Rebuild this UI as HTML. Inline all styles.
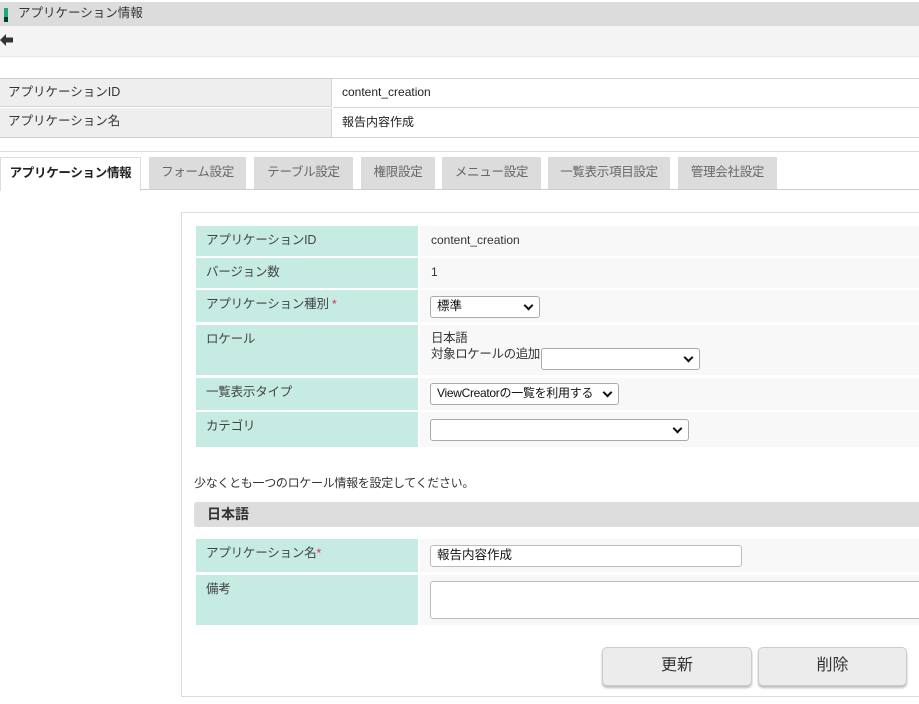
<!DOCTYPE html>
<html><head><meta charset="utf-8"><style>
*{margin:0;padding:0;box-sizing:border-box}
body{width:919px;height:704px;overflow:hidden;background:#fff;font-family:"Liberation Sans","Noto Sans CJK JP",sans-serif;font-size:13px;color:#333;position:relative;line-height:16px}
.a{position:absolute}
.tab{position:absolute;top:157px;height:32px;background:#dcdcdc;color:#666;text-align:center;line-height:30px;font-size:12.5px;letter-spacing:-0.3px}
.lab{position:absolute;left:196px;width:222px;background:#c5ebe2;color:#444;padding-left:10px;padding-top:6px;font-size:12.5px;letter-spacing:-0.2px}
.val{position:absolute;left:420px;right:0;background:#f8f8f8;padding-left:11px;padding-top:6px;font-size:12.5px}
.sel{position:absolute;background:#fff;border:1px solid #aaa;border-radius:3px;height:22px;font-size:12.5px;color:#111;padding:0 6px;line-height:19px;white-space:nowrap;overflow:hidden}
.sel:after{content:"";position:absolute;right:7px;top:5px;width:5px;height:5px;border-right:2px solid #111;border-bottom:2px solid #111;transform:rotate(45deg);background:#fff}
.star{color:#e0245e;font-size:12px;vertical-align:top}
.btn{position:absolute;top:647px;height:39px;background:#ececec;border:1px solid #ccc;border-radius:5px;box-shadow:0 2px 2px #bbb;text-align:center;line-height:35px;font-size:16px;color:#333}
</style></head><body>
<div class="a" style="left:0;top:2px;width:919px;height:24px;background:#dcdcdc"></div>
<div class="a" style="left:4px;top:8px;width:4px;height:9px;background:#1aaa80"></div>
<div class="a" style="left:4px;top:17px;width:4px;height:5px;background:#0b3a2c"></div>
<div class="a" style="left:18px;top:5px;font-size:12.5px;color:#333">アプリケーション情報</div>
<div class="a" style="left:0;top:26px;width:919px;height:31px;background:#f4f4f4;border-bottom:1px solid #e8e8e8"></div>
<svg class="a" style="left:0;top:34px" width="14" height="12" viewBox="0 0 14 12"><path d="M0 6L6 0V3.5H13V8.5H6V12Z" fill="#333"/></svg>

<div class="a" style="left:0;top:78px;width:919px;height:60px;border-top:1px solid #d4d4d4;border-bottom:1px solid #d4d4d4"></div>
<div class="a" style="left:0;top:79px;width:332px;height:28px;background:#eee;border-bottom:1px solid #d4d4d4;border-right:1px solid #d4d4d4;padding:5px 8px;font-size:12.5px">アプリケーションID</div>
<div class="a" style="left:0;top:108px;width:332px;height:29px;background:#eee;border-right:1px solid #d4d4d4;padding:5px 8px;font-size:12.5px">アプリケーション名</div>
<div class="a" style="left:333px;top:107px;width:586px;height:1px;background:#d4d4d4"></div>
<div class="a" style="left:342px;top:84px;font-size:12px;color:#222">content_creation</div>
<div class="a" style="left:342px;top:114px;font-size:12px;color:#222">報告内容作成</div>

<div class="a" style="left:0;top:151px;width:919px;height:1px;background:#ddd"></div>
<div class="a" style="left:0;top:189px;width:919px;height:1px;background:#ccc"></div>
<div class="tab" style="left:0;width:141px;height:34px;background:#fff;color:#222;font-weight:bold;border:1px solid #ddd;border-bottom:none">アプリケーション情報</div>
<div class="tab" style="left:149px;width:97px">フォーム設定</div>
<div class="tab" style="left:254px;width:99px">テーブル設定</div>
<div class="tab" style="left:361px;width:74px">権限設定</div>
<div class="tab" style="left:442px;width:99px">メニュー設定</div>
<div class="tab" style="left:548px;width:122px">一覧表示項目設定</div>
<div class="tab" style="left:678px;width:99px">管理会社設定</div>

<div class="a" style="left:181px;top:212px;width:750px;height:485px;border:1px solid #ddd"></div>

<div class="lab" style="top:226px;height:30px">アプリケーションID</div><div class="val" style="top:226px;height:30px;font-size:12px">content_creation</div>
<div class="lab" style="top:258px;height:30px">バージョン数</div><div class="val" style="top:258px;height:30px;font-size:12px">1</div>
<div class="lab" style="top:290px;height:32px">アプリケーション種別 <span class="star">*</span></div><div class="val" style="top:290px;height:32px"></div>
<div class="sel" style="left:430px;top:296px;width:110px">標準</div>
<div class="lab" style="top:325px;height:50px">ロケール</div><div class="val" style="top:325px;height:50px;padding-top:5px;line-height:16px;letter-spacing:-0.4px">日本語<br>対象ロケールの追加</div>
<div class="sel" style="left:541px;top:348px;width:159px"></div>
<div class="lab" style="top:378px;height:32px">一覧表示タイプ</div><div class="val" style="top:378px;height:32px"></div>
<div class="sel" style="left:430px;top:383px;width:189px;padding:0 20px 0 6px;font-size:12px;letter-spacing:-0.3px">ViewCreatorの一覧を利用する</div>
<div class="lab" style="top:412px;height:35px">カテゴリ</div><div class="val" style="top:412px;height:35px"></div>
<div class="sel" style="left:430px;top:419px;width:259px"></div>

<div class="a" style="left:194px;top:475px;font-size:12px;letter-spacing:-0.3px">少なくとも一つのロケール情報を設定してください。</div>
<div class="a" style="left:194px;top:502px;width:725px;height:25px;background:#ddd;border-radius:3px 0 0 3px;padding:4px 13px;font-weight:bold;font-size:14px;color:#333;line-height:16px">日本語</div>

<div class="lab" style="top:539px;height:33px">アプリケーション名<span class="star">*</span></div><div class="val" style="top:539px;height:33px"></div>
<div class="a" style="left:430px;top:545px;width:312px;height:22px;background:#fff;border:1px solid #bbb;border-radius:3px;padding:0 6px;line-height:19px;font-size:12.5px;color:#111">報告内容作成</div>
<div class="lab" style="top:575px;height:50px">備考</div><div class="val" style="top:575px;height:50px"></div>
<div class="a" style="left:430px;top:581px;width:500px;height:38px;background:#fff;border:1px solid #bbb;border-radius:3px"></div>

<div class="btn" style="left:602px;width:150px">更新</div>
<div class="btn" style="left:758px;width:149px">削除</div>
</body></html>
